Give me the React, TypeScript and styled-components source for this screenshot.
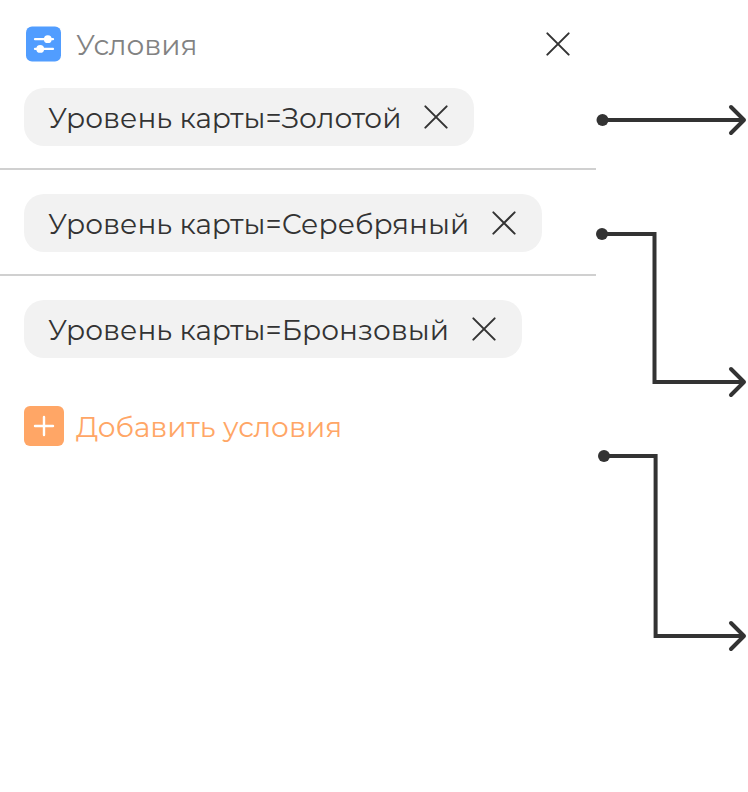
import React from "react";
import styled, { createGlobalStyle } from "styled-components";

const INK = "#333333";
const ACCENT = "#ffa666";

const GlobalStyle = createGlobalStyle`
  *, *::before, *::after { box-sizing: border-box; }
  body {
    margin: 0;
    background: #ffffff;
    font-family: Montserrat, "Open Sans", sans-serif;
    font-size: 28px;
    line-height: 34px;
    color: ${INK};
  }
`;

const Page = styled.main`
  display: grid;
  grid-template-columns: 596px 152px;
  width: 748px;
  height: 792px;
  overflow: hidden;
`;

const Panel = styled.section`
  display: flex;
  flex-direction: column;
`;

const Header = styled.header`
  display: flex;
  align-items: center;
  height: 88px;
  padding: 0 26px;
`;

const Title = styled.h1`
  flex: 1;
  margin: 1px 0 0 14px;
  font: inherit;
  color: #828282;
`;

const IconButton = styled.button`
  display: flex;
  padding: 0;
  border: 0;
  background: none;
  color: inherit;
`;

const Row = styled.div<{ $first?: boolean; $last?: boolean }>`
  display: flex;
  padding: ${(p) => (p.$first ? 0 : 24)}px 24px ${(p) => (p.$last ? 48 : 22)}px;
  border-bottom: ${(p) => (p.$last ? "0" : "2px solid #d0d0d0")};
`;

const Chip = styled.div`
  display: flex;
  align-items: center;
  gap: 22.6px;
  height: 58px;
  padding: 0 26px 0 24px;
  border-radius: 20px;
  background: #f2f2f2;
  white-space: nowrap;
`;

const ChipLabel = styled.span`
  padding-top: 1px;
`;

const AddButton = styled.button`
  display: flex;
  align-items: center;
  gap: 12px;
  height: 40px;
  margin: 0 24px;
  padding: 0;
  border: 0;
  background: none;
  font: inherit;
  color: ${ACCENT};
`;

const AddLabel = styled.span`
  padding-top: 1px;
`;

const CloseIcon = () => (
  <svg width="24" height="24" viewBox="0 0 24 24" fill="none" stroke={INK} strokeWidth="2" strokeLinecap="round">
    <path d="M1.35 1.35 22.65 22.65M22.65 1.35 1.35 22.65" />
  </svg>
);

const SlidersIcon = () => (
  <svg width="36" height="36" viewBox="0 0 36 36">
    <rect y="0.4" width="35" height="35" rx="6" fill="#519dff" />
    <path d="M9 13.2h18M9 22.9h18" stroke="#fff" strokeWidth="2.2" strokeLinecap="round" />
    <circle cx="21.8" cy="13.2" r="3.9" fill="#fff" />
    <circle cx="14.2" cy="22.9" r="3.9" fill="#fff" />
  </svg>
);

const PlusIcon = () => (
  <svg width="40" height="40" viewBox="0 0 40 40">
    <rect width="40" height="40" rx="6" fill={ACCENT} />
    <path d="M11 20h18M20 11v18" stroke="#fff" strokeWidth="2.4" strokeLinecap="round" />
  </svg>
);

const connectors = [
  { x: 6.5, y: 120, path: "M6 120H148", tip: 120 },
  { x: 6, y: 234, path: "M6 234H58.5V382H148", tip: 382 },
  { x: 8, y: 456, path: "M8 456H59.6V636H148", tip: 636 },
];

const Connectors = () => (
  <svg width="152" height="792" viewBox="0 0 152 792" fill="none" stroke={INK} strokeWidth="4">
    {connectors.map((c) => (
      <g key={c.tip}>
        <circle cx={c.x} cy={c.y} r="6" fill={INK} stroke="none" />
        <path d={c.path} />
        <path
          d={`M135 ${c.tip - 13}L148 ${c.tip}L135 ${c.tip + 13}`}
          strokeLinecap="round"
          strokeLinejoin="round"
        />
      </g>
    ))}
  </svg>
);

const conditions = ["Золотой", "Серебряный", "Бронзовый"];

export default function App() {
  return (
    <>
      <GlobalStyle />
      <Page>
        <Panel>
          <Header>
            <SlidersIcon />
            <Title>Условия</Title>
            <IconButton aria-label="Закрыть">
              <CloseIcon />
            </IconButton>
          </Header>
          {conditions.map((level, i) => (
            <Row key={level} $first={i === 0} $last={i === conditions.length - 1}>
              <Chip>
                <ChipLabel>Уровень карты={level}</ChipLabel>
                <IconButton aria-label="Удалить">
                  <CloseIcon />
                </IconButton>
              </Chip>
            </Row>
          ))}
          <AddButton>
            <PlusIcon />
            <AddLabel>Добавить условия</AddLabel>
          </AddButton>
        </Panel>
        <Connectors />
      </Page>
    </>
  );
}
